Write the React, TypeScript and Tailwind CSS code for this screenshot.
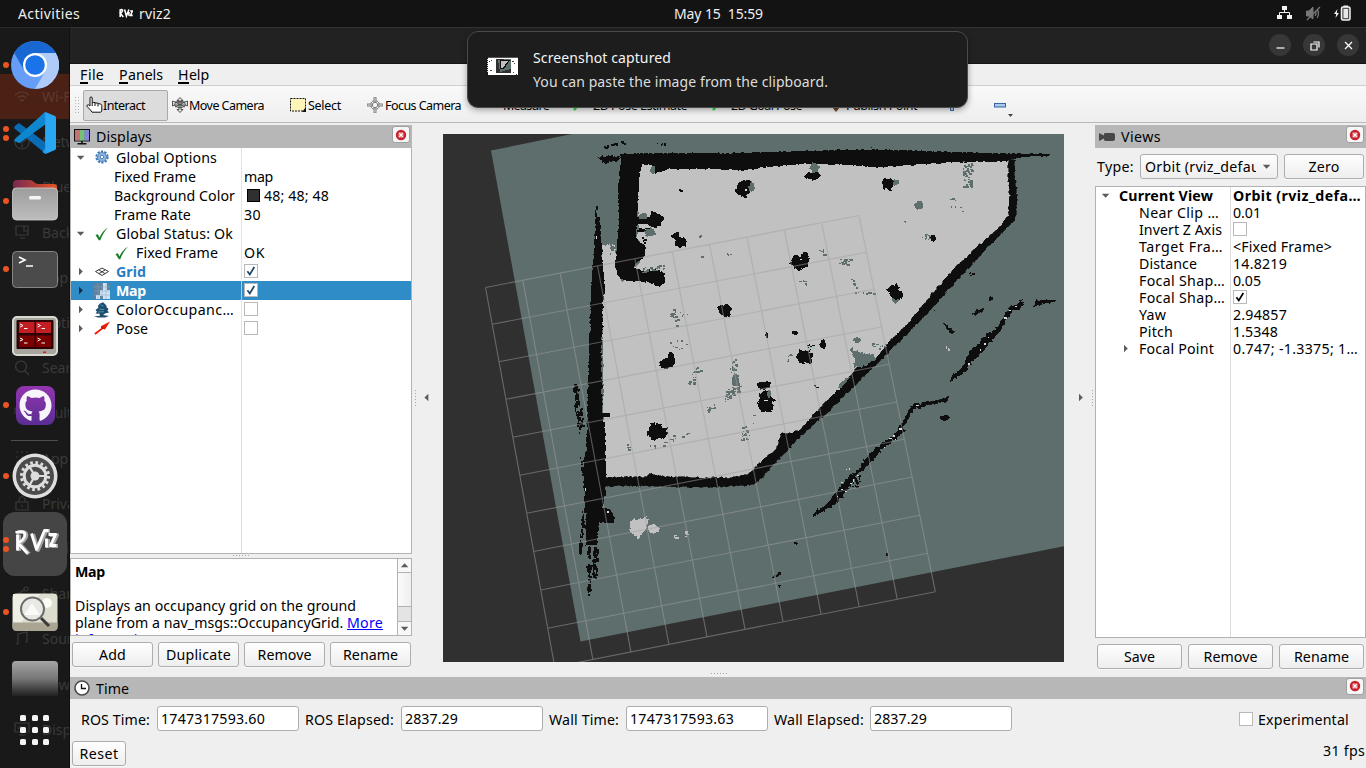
import React, { useLayoutEffect, useRef } from "react";
import { FaGithub } from "react-icons/fa";

/* ---------- text set to a given measure ---------- */
function Fit({ w, children, className = "" }: { w: number; children: string; className?: string }) {
  const ref = useRef<HTMLSpanElement>(null);
  useLayoutEffect(() => {
    const el = ref.current;
    if (!el) return;
    el.style.letterSpacing = "0px";
    const natural = el.getBoundingClientRect().width;
    el.style.letterSpacing = (w - natural) / children.length + "px";
  }, [w, children]);
  return (
    <span ref={ref} className={"inline-block shrink-0 self-center whitespace-pre " + className}>
      {children}
    </span>
  );
}

/* ---------- seeded noise and rough shapes for the occupancy map ---------- */
type P = [number, number];

function rng(seed: number) {
  let s = seed;
  return () => {
    s = (s * 1664525 + 1013904223) % 4294967296;
    return s / 4294967296;
  };
}

function rough(flat: number[], amp: number, seed: number): string {
  const pts: P[] = [];
  for (let i = 0; i < flat.length; i += 2) pts.push([flat[i], flat[i + 1]]);
  const r = rng(seed);
  const out: string[] = [];
  pts.forEach((a, i) => {
    const b = pts[(i + 1) % pts.length];
    const len = Math.hypot(b[0] - a[0], b[1] - a[1]);
    const n = Math.max(1, Math.round(len / 1.8));
    for (let k = 0; k < n; k++) {
      const t = k / n;
      const x = a[0] + (b[0] - a[0]) * t + (r() - 0.5) * amp;
      const y = a[1] + (b[1] - a[1]) * t + (r() - 0.5) * amp;
      out.push(x.toFixed(1) + "," + y.toFixed(1));
    }
  });
  return out.join(" ");
}

function Rough({ p, amp = 2, seed = 7, c = BLACK, grow = 0 }: { p: number[]; amp?: number; seed?: number; c?: string; grow?: number }) {
  return <polygon points={rough(p, amp, seed)} fill={c} stroke={grow ? c : "none"} strokeWidth={grow} />;
}

const BLACK = "#0e0e0e";
const FREE = "#c1c1c1";
const UNKNOWN = "#5e6e6c";

function Blob({ x, y, rx, ry, c = BLACK, seed = 3 }: { x: number; y: number; rx: number; ry: number; c?: string; seed?: number }) {
  const p: number[] = [];
  for (let i = 0; i < 12; i++) {
    const a = (i / 12) * Math.PI * 2;
    p.push(x + Math.cos(a) * rx, y + Math.sin(a) * ry);
  }
  return <Rough p={p} amp={Math.min(rx, ry) * 0.6} seed={seed + Math.round(x * 3 + y)} c={c} />;
}

function Specks({ from, to, spread, n, c, seed = 1, tall = 1 }: { from: P; to: P; spread: number; n: number; c: string; seed?: number; tall?: number }) {
  const r = rng(seed * 977 + Math.round(from[0] * 31 + from[1]));
  let d = "";
  for (let i = 0; i < n; i++) {
    const t = r();
    const x = Math.round(from[0] + (to[0] - from[0]) * t + (r() - 0.5) * spread);
    const y = Math.round(from[1] + (to[1] - from[1]) * t + (r() - 0.5) * spread);
    const w = 1 + Math.floor(r() * 2.7);
    const h = (1 + Math.floor(r() * 2)) * tall;
    d += "M" + x + " " + y + "h" + w + "v" + h + "h-" + w + "z";
  }
  return <path d={d} fill={c} />;
}

const GRID_L: P[] = [[485.5, 287.5], [492.3, 324.3], [499, 361.7], [505.7, 399.3], [512.7, 437.3], [519.7, 475.3], [526.7, 513.3], [533.7, 551.5], [540.7, 590], [547.7, 628.3], [554.8, 667]];
const GRID_R: P[] = [[859, 215.5], [866.3, 252.3], [873.7, 289.3], [881.3, 327], [889, 364.3], [896.7, 402], [904.3, 439.3], [912.3, 477], [920, 515.3], [927.5, 553.3], [935.3, 591.7]];

function Grid() {
  const d: string[] = [];
  for (let i = 0; i <= 10; i++) {
    d.push("M" + GRID_L[i].join(" ") + "L" + GRID_R[i].join(" "));
    const t = i / 10;
    const top = [GRID_L[0][0] + (GRID_R[0][0] - GRID_L[0][0]) * t, GRID_L[0][1] + (GRID_R[0][1] - GRID_L[0][1]) * t];
    const bot = [GRID_L[10][0] + (GRID_R[10][0] - GRID_L[10][0]) * t, GRID_L[10][1] + (GRID_R[10][1] - GRID_L[10][1]) * t];
    d.push("M" + top.join(" ") + "L" + bot.join(" "));
  }
  return <path d={d.join("")} stroke="#a0a0a4" strokeOpacity="0.5" strokeWidth="1.15" fill="none" />;
}

const OBSTACLES: number[][] = [
  [743, 190, 7, 8], [746, 184, 5, 4], [680, 242, 6, 6], [676, 236, 4, 4], [725, 311, 7, 6], [667, 364, 8, 5], [671, 358, 4, 6],
  [800, 262, 9, 7], [805, 256, 4, 4], [657, 432, 11, 8], [813, 176, 8, 4], [887, 184, 6, 6], [933, 238, 3, 3.5], [894, 290, 6, 6], [897, 295, 6, 5],
  [823, 344, 3, 5], [805, 356, 9, 7], [766, 400, 8, 11], [764, 385, 7, 4], [767, 407, 7, 5],
  [795, 333, 3, 2], [767, 335, 1.5, 3], [606, 415, 5, 3],
];

function MapView() {
  return (
    <svg width="621" height="528" viewBox="443 134 621 528" className="block bg-[#303030]">
      <polygon points="491,150.5 577,133 1065,133 1065,546 580.5,641.5" fill={UNKNOWN} />
      <g shapeRendering="crispEdges">
        {/* free space */}
        <Rough c={FREE} amp={1.5} p={[640, 160, 1010, 160, 1012, 215, 970, 260, 935, 300, 885, 352, 858, 372, 800, 430, 752, 478, 604, 480, 602, 246, 614, 243, 617, 262, 622, 282, 640, 262, 638, 200]} />
        {/* upper wall, running into the thick left corner */}
        <Rough amp={1.6} p={[620, 153.5, 680, 153, 740, 153, 800, 151, 850, 149.5, 900, 150, 950, 152, 1000, 153.5, 1020, 153.5, 1051, 154, 1048, 156, 1020, 157, 1005, 161.5, 950, 162.5, 900, 166, 880, 167.5, 850, 165, 800, 164, 765, 167, 744, 171, 720, 169, 670, 169, 655, 174, 652, 165, 642, 164, 639, 178, 638, 200, 637, 216, 650, 217, 652, 211, 659, 214, 664, 218, 661, 226, 655, 228, 645, 224, 637, 225, 636, 236, 641, 243, 645, 246, 645, 256, 636, 264, 634, 268, 645, 272, 645, 281, 630, 281, 620, 279, 615, 268, 617, 250, 619, 220, 618, 190, 620, 170]} />
        <Rough p={[645, 271, 655, 269, 664, 272, 666, 280, 660, 287, 652, 283, 640, 281]} amp={3} />
        <Rough p={[598, 157, 610, 155, 622, 157, 620, 160, 604, 163]} amp={3} />
        <Specks from={[604, 146]} to={[625, 142]} spread={3} n={20} c={BLACK} />
        <Specks from={[658, 144]} to={[666, 144]} spread={3} n={6} c={BLACK} />
        <Specks from={[596, 206]} to={[598, 238]} spread={3} n={30} c={BLACK} tall={2} />
        {/* left wall */}
        <Rough p={[596, 216, 595, 235, 594, 250, 593, 262, 591, 290, 590, 320, 589, 350, 588, 390, 587, 420, 586, 450, 583, 470, 584, 490, 586, 510, 586, 545, 590, 545, 597, 545, 599, 523, 615, 523, 615, 517, 610, 509, 602, 508, 605, 495, 606, 475, 606, 455, 605, 430, 602, 410, 602, 380, 601, 350, 603, 330, 603, 300, 605, 292, 603, 270, 602, 250, 600, 230, 598, 216]} />
        <Specks from={[588, 545]} to={[588, 593]} spread={4} n={40} c={BLACK} tall={2} />
        <Specks from={[595, 545]} to={[594, 575]} spread={5} n={38} c={BLACK} tall={2} />
        <Specks from={[575, 383]} to={[580, 430]} spread={6} n={52} c={BLACK} tall={2} />
        <Specks from={[585, 495]} to={[579, 550]} spread={2} n={40} c={BLACK} tall={2} />
        <Specks from={[582, 458]} to={[583, 475]} spread={4} n={14} c={BLACK} tall={2} />
        {/* lower wall and the long diagonal */}
        <Rough grow={0.6} p={[600, 477, 645, 477, 650, 474, 670, 477, 730, 478, 748, 475, 763, 460, 776, 450, 781, 434, 790, 433, 800, 430, 817, 411, 837, 391, 850, 377, 857, 367, 877, 357, 890, 341, 910, 322, 930, 296, 950, 273, 977, 247, 1000, 227, 1008, 216, 1010, 197, 1008, 177, 1009, 160, 1015, 160, 1015, 177, 1017, 197, 1015, 220, 993, 242, 963, 273, 937, 303, 910, 331, 883, 358, 863, 377, 843, 397, 830, 410, 803, 434, 783, 455, 756, 483, 745, 486, 700, 487, 650, 486, 600, 486]} />
        {/* unexplored patches inside the room */}
        <Rough c={UNKNOWN} amp={3} p={[848, 346, 860, 352, 874, 355, 876, 359, 862, 367, 853, 367, 855, 358]} />
        <Blob x={857} y={340} rx={4} ry={3} c={UNKNOWN} />
        <Rough c={UNKNOWN} amp={2} p={[838, 387, 845, 378, 850, 377, 842, 388]} />
        <Blob x={815} y={168} rx={5} ry={5} c={UNKNOWN} />
        <Blob x={751} y={186} rx={4} ry={5} c={UNKNOWN} />
        <Blob x={895} y={182} rx={4} ry={3} c={UNKNOWN} />
        <Blob x={919} y={205} rx={4} ry={5} c={UNKNOWN} />
        <Blob x={896} y={299} rx={4} ry={4} c={UNKNOWN} />
        <Blob x={650} y={232} rx={6} ry={5} c={UNKNOWN} />
        <Blob x={643} y={216} rx={5} ry={3} c={UNKNOWN} />
        <Blob x={653} y={170} rx={2.5} ry={4} c={UNKNOWN} />
        <Blob x={640} y={236} rx={4} ry={5} c={FREE} />
        <Specks from={[967, 163]} to={[967, 186]} spread={9} n={50} c={UNKNOWN} />
        <Specks from={[610, 242]} to={[612, 252]} spread={7} n={12} c={UNKNOWN} />
        <Specks from={[642, 270]} to={[663, 266]} spread={5} n={24} c={UNKNOWN} />
        <Specks from={[671, 311]} to={[676, 322]} spread={7} n={20} c={UNKNOWN} />
        <Specks from={[656, 340]} to={[686, 345]} spread={9} n={8} c={UNKNOWN} />
        <Specks from={[690, 385]} to={[697, 368]} spread={6} n={16} c={UNKNOWN} />
        <Specks from={[732, 360]} to={[736, 390]} spread={7} n={34} c={UNKNOWN} />
        <Blob x={736} y={382} rx={4} ry={5} c={UNKNOWN} />
        <Specks from={[724, 400]} to={[738, 386]} spread={8} n={36} c={UNKNOWN} />
        <Specks from={[706, 410]} to={[716, 406]} spread={4} n={12} c={UNKNOWN} />
        <Specks from={[742, 440]} to={[750, 417]} spread={9} n={18} c={UNKNOWN} />
        <Specks from={[651, 448]} to={[686, 432]} spread={5} n={16} c={UNKNOWN} />
        <Specks from={[626, 444]} to={[629, 448]} spread={3} n={6} c={UNKNOWN} />
        <Specks from={[841, 260]} to={[849, 262]} spread={6} n={18} c={UNKNOWN} />
        <Specks from={[820, 248]} to={[829, 258]} spread={4} n={7} c={UNKNOWN} />
        <Specks from={[800, 280]} to={[806, 283]} spread={5} n={6} c={UNKNOWN} />
        <Specks from={[855, 292]} to={[873, 292]} spread={2} n={9} c={UNKNOWN} />
        <Specks from={[850, 277]} to={[858, 288]} spread={3} n={7} c={UNKNOWN} />
        <Specks from={[948, 200]} to={[962, 208]} spread={12} n={7} c={UNKNOWN} />
        <Specks from={[924, 235]} to={[931, 239]} spread={5} n={12} c={UNKNOWN} />
        <Specks from={[786, 362]} to={[792, 352]} spread={4} n={6} c={UNKNOWN} />
        <Specks from={[699, 232]} to={[701, 264]} spread={3} n={3} c={UNKNOWN} />
        <Specks from={[726, 253]} to={[730, 256]} spread={3} n={4} c={UNKNOWN} />
        <Specks from={[676, 311]} to={[687, 315]} spread={4} n={5} c={UNKNOWN} />
        <Specks from={[870, 345]} to={[886, 345]} spread={6} n={9} c={UNKNOWN} />
        <Specks from={[904, 221]} to={[905, 222]} spread={1} n={2} c={UNKNOWN} />
        {/* obstacles */}
        {OBSTACLES.map((o, i) => (
          <Blob key={i} x={o[0]} y={o[1]} rx={o[2]} ry={o[3]} seed={i + 5} />
        ))}
        <Specks from={[638, 229]} to={[648, 230]} spread={3} n={10} c={BLACK} />
        <Specks from={[641, 235]} to={[644, 241]} spread={2} n={6} c={BLACK} />
        <Specks from={[679, 189]} to={[681, 190]} spread={1} n={2} c={BLACK} />
        <Blob x={769} y={394} rx={2} ry={4} c={UNKNOWN} />
        <path d="M745 189h2v2h-2zM800 259h2v1h-2zM764 400h4v1h-4zM607 511h2v2h-2zM585 488h1v3h-1zM596 236h1v3h-1z" fill="#dcdcdc" />
        <Specks from={[808, 344]} to={[813, 347]} spread={4} n={8} c={BLACK} />
        <Specks from={[809, 345]} to={[811, 347]} spread={4} n={4} c="#a9bcc0" />
        <Specks from={[814, 384]} to={[815, 387]} spread={2} n={3} c={BLACK} />
        {/* returns seen beyond the walls */}
        <Rough amp={3} grow={1.6} p={[814, 515, 818, 511, 830, 502, 837, 493, 846, 481, 860, 469, 868, 457, 880, 446, 895, 434, 902, 426, 911, 408, 916, 404, 912, 410, 904, 424, 903, 431, 893, 440, 880, 449, 871, 461, 855, 476, 848, 488, 838, 500, 828, 508]} />
        <Rough amp={2.4} grow={0.8} p={[922, 403, 938, 400, 949, 397, 947, 401, 935, 403, 922, 406]} />
        <Specks from={[914, 406]} to={[926, 402]} spread={5} n={26} c={BLACK} />
        <Specks from={[853, 484]} to={[860, 473]} spread={7} n={20} c={BLACK} />
        <path d="M841 489h2v1h-2zM845 491h2v1h-2zM850 483h2v1h-2zM853 479h1v3h-1zM857 475h2v1h-2zM841 482h2v1h-2zM846 469h1v1h-1zM849 468h1v2h-1zM837 496h1v1h-1zM889 438h3v1h-3zM893 435h2v2h-2zM884 447h1v1h-1zM899 428h3v2h-3zM895 439h1v1h-1zM916 405h3v1h-3z" fill="#d4d8d8" />
        <Blob x={945} y={418} rx={5} ry={2.6} />
        <Rough amp={3} grow={1.4} p={[951, 380, 955, 374, 966, 364, 970, 352, 982, 342, 988, 333, 996, 331, 1004, 318, 1010, 308, 1021, 302, 1022, 305, 1012, 312, 1005, 320, 998, 333, 988, 343, 980, 354, 970, 362, 966, 370]} />
        <path d="M1004 317h3v2h-3zM1009 310h2v1h-2zM1015 306h2v1h-2zM968 363h2v2h-2zM984 343h2v2h-2zM980 349h1v2h-1zM988 337h1v1h-1z" fill="#d4d8d8" />
        <Rough amp={2} grow={1} p={[1034, 306, 1037, 301, 1046, 300, 1056, 301, 1044, 303, 1036, 305]} />
        <Specks from={[1020, 300]} to={[1023, 304]} spread={3} n={6} c={BLACK} />
        <Rough amp={3} grow={0.8} p={[973, 313, 978, 310, 984, 308, 982, 311, 976, 314]} />
        <Specks from={[988, 303]} to={[991, 295]} spread={3} n={10} c={BLACK} />
        <Rough amp={2.4} grow={0.8} p={[944, 322, 949, 327, 954, 332, 951, 333, 947, 327]} />
        <Specks from={[968, 272]} to={[971, 274]} spread={3} n={4} c={BLACK} />
        <Specks from={[946, 346]} to={[948, 350]} spread={3} n={5} c={FREE} />
        <Specks from={[794, 543]} to={[798, 541]} spread={2} n={5} c={BLACK} />
        <Specks from={[772, 577]} to={[780, 571]} spread={1} n={10} c={BLACK} />
        <Specks from={[778, 585]} to={[779, 586]} spread={1} n={3} c={BLACK} />
        <path d="M886 553h2v3h-2zM871 147h1v1h-1zM934 310h1v1h-1z" fill={BLACK} />
        {/* free patches below the room */}
        <Rough c={FREE} amp={3} p={[630, 520, 642, 518, 647, 516, 649, 523, 643, 533, 638, 538, 630, 531]} />
        <Blob x={654} y={529} rx={6} ry={4} c={FREE} />
        <Specks from={[672, 536]} to={[677, 537]} spread={2} n={6} c={FREE} />
        <Specks from={[685, 535]} to={[687, 531]} spread={3} n={9} c={FREE} />
      </g>
      <Grid />
    </svg>
  );
}

/* ---------- small widgets ---------- */
function Btn({ className, label, w }: { className: string; label: string; w: number }) {
  return (
    <button className={"flex shrink-0 items-center justify-center rounded-[3px] border border-[#adadad] bg-gradient-to-b from-[#fefefe] to-[#eeeeee] shadow-[0_1px_0_#f8f8f8] " + className}>
      <Fit w={w}>{label}</Fit>
    </button>
  );
}

function CloseBtn() {
  return (
    <span className="flex h-[17px] w-[18px] items-center justify-center rounded-[3px] border border-[#a0a0a0] bg-[#f6f6f6]">
      <svg width="12" height="12" viewBox="0 0 12 12">
        <circle cx="6" cy="6" r="5.2" fill="#c6202c" />
        <rect x="3" y="3" width="6" height="6" rx="1.5" fill="#dc6068" />
        <path d="M4.3 4.3l3.4 3.4M7.7 4.3L4.3 7.7" stroke="#fff" strokeWidth="1.3" />
      </svg>
    </span>
  );
}

function Check({ on = false, blue = false }: { on?: boolean; blue?: boolean }) {
  return (
    <span className="flex h-[14px] w-[14px] items-center justify-center border border-[#b9b9b9] bg-white">
      {on && (
        <svg width="10" height="10" viewBox="0 0 10 10" fill="none">
          <path d="M1.4 5.2l2.4 3.2L8.3 1" stroke={blue ? "#1d4664" : "#000"} strokeWidth="1.7" />
        </svg>
      )}
    </span>
  );
}

function Caret({ dir, dark = false }: { dir: "d" | "r" | "l" | "u" | ""; dark?: boolean }) {
  const d = { d: "M.8 2.8h7.600L4.600 6.800z", u: "M.8 6.300h7.600L4.600 2.200z", r: "M3 .8v7.400L6.800 4.500z", l: "M6.400.8v7.400L2.400 4.500z", "": "" }[dir];
  return (
    <svg width="9" height="9" viewBox="0 0 9 9" className="shrink-0">
      <path d={d} fill={dark ? "#0c2c46" : "#5c5c5c"} />
    </svg>
  );
}

function Dots({ vertical = false }: { vertical?: boolean }) {
  const n = [0, 1, 2, 3, 4, 5];
  return vertical ? (
    <svg width="2" height="16" viewBox="0 0 2 16">{n.map((i) => <rect key={i} y={i * 3} width="1" height="1" fill="#a5a5a5" />)}</svg>
  ) : (
    <svg width="17" height="2" viewBox="0 0 17 2" className="block">{n.map((i) => <rect key={i} x={i * 3} width="1" height="1" fill="#a5a5a5" />)}</svg>
  );
}

/* ---------- tree icons ---------- */
const TickIcon = () => (
  <svg width="16" height="16" viewBox="0 0 16 16"><path d="M1.5 9L3.8 8.2 5.5 11.4C7.5 7 10 4.2 14 1.5 10.6 5.2 8 9.4 6.3 14.2H4.8z" fill="#1b7d26" /></svg>
);
const GearIcon = () => (
  <svg width="16" height="16" viewBox="0 0 16 16">
    <circle cx="8" cy="7" r="5.6" fill="none" stroke="#3a76b5" strokeWidth="2" strokeDasharray="2.2 1.32" />
    <circle cx="8" cy="7" r="4.5" fill="#8db4dc" stroke="#4f86c2" />
    <circle cx="8" cy="7" r="1.7" fill="#fff" stroke="#4f86c2" />
  </svg>
);
const GridIcon = () => (
  <svg width="16" height="16" viewBox="0 0 16 16"><path d="M1.5 7.5L8 4l6.5 3.5L8 11.5zM4.7 5.8l6.5 3.9M11.3 5.8L4.8 9.7" stroke="#3c3c3c" fill="none" /></svg>
);
const MapIcon = () => (
  <svg width="16" height="16" viewBox="0 0 16 16">
    <rect width="16" height="16" fill="#5f7f9b" />
    <path d="M9 0h4v7h3v9H9v-3H6v3H2v-4h4V7h3z" fill="#cfe3f4" />
    <path d="M0 4h16M0 8h16M0 12h16M4 0v16M8 0v16M12 0v16" stroke="#8aa6be" strokeWidth=".5" />
  </svg>
);
const TreeIcon = () => (
  <svg width="16" height="16" viewBox="0 0 16 16">
    <path d="M6 1.5L9 .3l2 1.7 1.500 1.700 0 1.600 2 1.400-1 2 1.600 1.800-3.600.8L9 13l6 1-4 1.600H4L0 14.300l6-.6-.5-1.900-4-.2 1.500-1.900L1.500 8l2.800-2.200-.2-2.200z" fill="#1f4f6e" />
    <path d="M6.500 3l3 1M5 7l5 .6M4 10l6-.3" stroke="#4d8fb0" />
  </svg>
);
const PoseIcon = () => (
  <svg width="16" height="16" viewBox="0 0 16 16"><path d="M.3 12.3L7.5 7l-.6-1.700L16 .5 11 8.600l-1.800-.8L1.600 13.700z" fill="#f01808" /><path d="M6.900 5.300l4.100 3.300-2-.8L7.500 7z" fill="#7c1a10" /></svg>
);
const MonitorIcon = () => (
  <svg width="16" height="16" viewBox="0 0 16 16">
    <rect x=".5" y=".5" width="15" height="11.5" fill="#777" stroke="#111" />
    <path d="M1 1h5v10.5H1z" fill="#c27474" /><path d="M6 1h4.5v10.5H6z" fill="#74c274" /><path d="M10.500 1H15v10.500h-4.500z" fill="#8686d8" />
    <path d="M8 12v2M3.500 14.800h9" stroke="#111" strokeWidth="1.600" />
  </svg>
);

type Row = { depth: number; caret: "d" | "r" | ""; icon?: React.ReactNode; name: string; w: number; value?: React.ReactNode; sel?: boolean; style?: string };

const ROWS: Row[] = [
  { depth: 0, caret: "d", icon: <GearIcon />, name: "Global Options", w: 101 },
  { depth: 1, caret: "", name: "Fixed Frame", w: 82, value: <Fit w={29}>map</Fit> },
  { depth: 1, caret: "", name: "Background Color", w: 121, value: <><span className="mr-[4px] ml-[3px] h-[13px] w-[13px] border border-black bg-[#303030]" /><Fit w={65}>48; 48; 48</Fit></> },
  { depth: 1, caret: "", name: "Frame Rate", w: 77, value: <Fit w={17}>30</Fit> },
  { depth: 0, caret: "d", icon: <TickIcon />, name: "Global Status: Ok", w: 117 },
  { depth: 2, caret: "", icon: <TickIcon />, name: "Fixed Frame", w: 82, value: <Fit w={21}>OK</Fit> },
  { depth: 0, caret: "r", icon: <GridIcon />, name: "Grid", w: 30, value: <Check on blue />, style: "font-bold text-[#2a7dc4]" },
  { depth: 0, caret: "r", icon: <MapIcon />, name: "Map", w: 30, value: <Check on blue />, sel: true, style: "font-bold" },
  { depth: 0, caret: "r", icon: <TreeIcon />, name: "ColorOccupanc…", w: 118, value: <Check /> },
  { depth: 0, caret: "r", icon: <PoseIcon />, name: "Pose", w: 32, value: <Check /> },
];

function DisplaysPanel() {
  return (
    <section className="flex w-[342px] shrink-0 flex-col">
      <header className="flex h-[23px] items-center bg-[#b7b7b7] pr-[2px] pl-[4px]">
        <MonitorIcon />
        <span className="ml-[6px] flex-1"><Fit w={56}>Displays</Fit></span>
        <span className="-mt-[4px]"><CloseBtn /></span>
      </header>
      <div className="flex h-[406px] flex-col border-x border-b border-[#b2b2b2] bg-white">
        {ROWS.map((r, i) => (
          <div key={i} className={"flex h-[19px] shrink-0 items-stretch " + (r.sel ? "bg-[#308cc6] text-white" : "")}>
            <div className="flex w-[171px] items-center border-r border-[#dcdcdc]/80">
              <span className="ml-[5px] flex w-[18px]"><Caret dir={r.caret} dark={r.sel} /></span>
              {r.depth === 2 && <span className="w-[20px]" />}
              {r.depth === 1 ? <span className="w-[20px]" /> : <span className="mr-[6px] flex w-[16px]">{r.icon}</span>}
              <Fit w={r.w} className={r.style}>{r.name}</Fit>
            </div>
            <div className="-mt-px flex items-center pl-[2px]">{r.value}</div>
          </div>
        ))}
        <div className="flex flex-1"><div className="w-[171px] border-r border-[#dcdcdc]" /></div>
      </div>
      <div className="flex h-[4px] items-center justify-center"><Dots /></div>
      <div className="flex h-[78px] border border-[#b2b2b2] bg-white">
        <div className="flex flex-1 flex-col overflow-hidden pt-[4px] pl-[4px] leading-[17px]">
          <div className="h-[17px] shrink-0"><Fit w={30} className="font-bold">Map</Fit></div>
          <div className="h-[17px] shrink-0" />
          <div className="h-[17px] shrink-0"><Fit w={281}>Displays an occupancy grid on the ground</Fit></div>
          <div className="flex h-[17px] shrink-0"><Fit w={272}>plane from a nav_msgs::OccupancyGrid. </Fit><Fit w={36} className="text-[#0000ff] underline">More</Fit></div>
          <div className="h-[17px] shrink-0"><Fit w={84} className="text-[#0000ff] underline">information.</Fit></div>
        </div>
        <div className="flex w-[14px] flex-col border-l border-[#b2b2b2] bg-[#e4e4e4]">
          <span className="flex h-[14px] items-center justify-center border-b border-[#b2b2b2] bg-[#f8f8f8]"><Caret dir="u" /></span>
          <span className="h-[34px] border-b border-[#b2b2b2] bg-gradient-to-r from-[#fbfbfb] to-[#eeeeee]" />
          <span className="flex-1" />
          <span className="flex h-[14px] items-center justify-center border-t border-[#b2b2b2] bg-[#f8f8f8]"><Caret dir="d" /></span>
        </div>
      </div>
      <div className="flex gap-[5px] pt-[6px] pl-[2px]">
        <Btn className="h-[25px] w-[81px]" label="Add" w={27} />
        <Btn className="h-[25px] w-[81px]" label="Duplicate" w={65} />
        <Btn className="h-[25px] w-[81px]" label="Remove" w={54} />
        <Btn className="h-[25px] w-[81px]" label="Rename" w={55} />
      </div>
    </section>
  );
}

type VRow = { name: string; w: number; v: string | null; vw: number; on?: boolean; caret?: "d" | "r"; bold?: boolean };
const VIEW_ROWS: VRow[] = [
  { name: "Current View", w: 94, v: "Orbit (rviz_defa…", vw: 128, caret: "d", bold: true },
  { name: "Near Clip …", w: 80, v: "0.01", vw: 28 },
  { name: "Invert Z Axis", w: 83, v: null, vw: 0 },
  { name: "Target Fra…", w: 84, v: "<Fixed Frame>", vw: 99 },
  { name: "Distance", w: 58, v: "14.8219", vw: 54 },
  { name: "Focal Shap…", w: 86, v: "0.05", vw: 28 },
  { name: "Focal Shap…", w: 86, v: null, vw: 0, on: true },
  { name: "Yaw", w: 27, v: "2.94857", vw: 54 },
  { name: "Pitch", w: 34, v: "1.5348", vw: 45 },
  { name: "Focal Point", w: 75, v: "0.747; -1.3375; 1…", vw: 125, caret: "r" },
];

function ViewsPanel() {
  return (
    <section className="flex w-[271px] shrink-0 flex-col">
      <header className="flex h-[23px] items-center bg-[#b7b7b7] pr-[2px] pl-[4px]">
        <svg width="17" height="10" viewBox="0 0 17 10"><path d="M0 1l5 2.500V1.500Q5.500 1 7 1h7q2 0 2 2v4q0 2-2 2H7Q5 9 5 7.500v-1L0 9z" fill="#474747" /></svg>
        <span className="ml-[5px] flex-1"><Fit w={40}>Views</Fit></span>
        <span className="-mt-[4px]"><CloseBtn /></span>
      </header>
      <div className="flex h-[38px] items-center pb-px pl-[2px]">
        <span className="w-[43px]"><Fit w={37}>Type:</Fit></span>
        <div className="flex h-[25px] w-[138px] items-center rounded-[3px] border border-[#adadad] bg-gradient-to-b from-[#fefefe] to-[#eeeeee] pl-[4px]">
          <span className="flex w-[111px] overflow-hidden"><Fit w={115}>Orbit (rviz_defau</Fit></span>
          <span className="ml-[6px] flex"><Caret dir="d" /></span>
        </div>
        <Btn className="ml-[6px] h-[25px] w-[80px]" label="Zero" w={31} />
      </div>
      <div className="flex h-[452px] flex-col border border-[#b2b2b2] bg-white">
        {VIEW_ROWS.map((r, i) => (
          <div key={i} className={"flex h-[17px] shrink-0 " + (r.bold ? "font-bold" : "")}>
            <div className="flex w-[135px] items-center border-r border-[#dcdcdc]">
              <span className={"flex " + (r.bold ? "ml-[5px] w-[18px]" : "ml-[25px] w-[18px]")}>{r.caret && <Caret dir={r.caret} />}</span>
              <Fit w={r.w}>{r.name}</Fit>
            </div>
            <div className="flex items-center pl-[2px]">{r.v === null ? <span className="-mt-[2px]"><Check on={r.on} /></span> : <Fit w={r.vw}>{r.v}</Fit>}</div>
          </div>
        ))}
        <div className="flex flex-1"><div className="w-[135px] border-r border-[#dcdcdc]" /></div>
      </div>
      <div className="flex gap-[6px] pt-[6px] pl-[2px]">
        <Btn className="h-[25px] w-[85px]" label="Save" w={31} />
        <Btn className="h-[25px] w-[85px]" label="Remove" w={54} />
        <Btn className="h-[25px] w-[85px]" label="Rename" w={55} />
      </div>
    </section>
  );
}

function Field({ label, lw, value, vw, cell }: { label: string; lw: number; value: string; vw: number; cell: string }) {
  return (
    <div className="flex items-center">
      <span className={cell}><Fit w={lw}>{label}</Fit></span>
      <span className="-mt-px flex h-[25px] w-[142px] items-center rounded-[3px] border border-[#adadad] bg-white pl-[3px]"><Fit w={vw}>{value}</Fit></span>
    </div>
  );
}

function TimePanel() {
  return (
    <section className="flex h-[91px] shrink-0 flex-col">
      <header className="flex h-[22px] items-center bg-[#b7b7b7] pr-[2px] pl-[4px]">
        <svg width="16" height="16" viewBox="0 0 16 16"><circle cx="8" cy="8" r="7" fill="#fff" stroke="#4a4a4a" strokeWidth="1.600" /><path d="M7.500 4v4.500H12" stroke="#111" fill="none" strokeWidth="1.300" /></svg>
        <span className="ml-[6px] flex-1"><Fit w={33}>Time</Fit></span>
        <span className="-mt-[4px]"><CloseBtn /></span>
      </header>
      <div className="flex h-[40px] items-center pl-[11px]">
        <Field label="ROS Time:" lw={69} value="1747317593.60" vw={104} cell="w-[76px]" />
        <Field label="ROS Elapsed:" lw={89} value="2837.29" vw={53} cell="w-[102px] pl-[6px]" />
        <Field label="Wall Time:" lw={70} value="1747317593.63" vw={104} cell="w-[83px] pl-[6px]" />
        <Field label="Wall Elapsed:" lw={90} value="2837.29" vw={53} cell="w-[102px] pl-[6px]" />
        <span className="ml-[227px]"><Check /></span>
        <Fit w={91} className="ml-[5px]">Experimental</Fit>
      </div>
      <div className="flex items-center justify-between pt-[2px] pr-[1px] pl-[2px]">
        <Btn className="h-[25px] w-[54px]" label="Reset" w={39} />
        <Fit w={42} className="-mt-[7px]">31 fps</Fit>
      </div>
    </section>
  );
}

/* ---------- toolbar ---------- */
const MoveIcon = ({ focus = false }: { focus?: boolean }) => (
  <svg width="16" height="16" viewBox="0 0 16 16" fill="none" stroke={focus ? "#777" : "#444"} strokeWidth=".9">
    {focus ? (
      <><circle cx="8" cy="8" r="4.500" /><circle cx="8" cy="8" r="2.700" /><path d="M7 0h2v5H7zM7 11h2v5H7zM0 7h5v2H0zM11 7h5v2h-5z" fill="#ddd" /></>
    ) : (
      <><path d="M5 3.500L8 .5l3 3H9v9h2l-3 3-3-3h2v-9zM3 5L.5 4v5L3 8h10l2.500 1V4L13 5z" fill="#ddd" /><ellipse cx="8" cy="7.500" rx="5.500" ry="3" /><path d="M3 10l10-5M3 5l10 5" /></>
    )}
  </svg>
);

function Toolbar() {
  return (
    <div className="flex h-[38px] shrink-0 items-center border-t border-b border-t-[#cfcfcf] border-b-[#b9b9b9] bg-gradient-to-b from-[#f9f9f9] to-[#eeeeee] pt-[2px] text-[12.5px]">
      <svg width="5" height="17" viewBox="0 0 5 17" className="ml-[5px]">
        {[0, 1, 2, 3, 4, 5].map((i) => <path key={i} d={"M0 " + i * 3 + "h1v1h-1zM3 " + i * 3 + "h1v1h-1z"} fill="#b5b5b5" />)}
      </svg>
      <div className="ml-[3px] flex h-[31px] w-[85px] items-center rounded-[2px] border border-[#a9a9a9] bg-[#dcdcdc] pl-[2px]">
        <svg width="17" height="17" viewBox="0 0 17 17" className="-mt-[2px]"><path d="M4 7V1.500Q5 .3 6.200 1.500V7l1-.6 1.800.2 1 .5 1.800 0 1 .6 2 .3 1 1.500V15l-1 1.200H6L4.500 14 1 10.500Q.6 8.500 2.500 8.800L4 10zM6.200 7v3M9 7v3M12 7.500v3" fill="#fff" stroke="#111" /></svg>
        <Fit w={42}>Interact</Fit>
      </div>
      <span className="ml-[4px]"><MoveIcon /></span>
      <Fit w={75} className="ml-[1px]">Move Camera</Fit>
      <svg width="16" height="14" viewBox="0 0 16 14" className="ml-[26px]"><rect x=".5" y=".5" width="15" height="12.500" fill="#fdf6b8" stroke="#111" strokeDasharray="2 1" /><path d="M16 9v5h-4z" fill="#111" /></svg>
      <Fit w={33} className="ml-[2px]">Select</Fit>
      <span className="ml-[26px]"><MoveIcon focus /></span>
      <Fit w={76} className="ml-[2px]">Focus Camera</Fit>
      <Fit w={46} className="ml-[42px]">Measure</Fit>
      <svg width="12" height="16" viewBox="0 0 12 16" className="ml-[24px]"><path d="M1 13L10 3" stroke="#1ce03a" strokeWidth="2.500" /></svg>
      <Fit w={94} className="ml-[8px]">2D Pose Estimate</Fit>
      <svg width="12" height="16" viewBox="0 0 12 16" className="ml-[25px]"><path d="M1 13L10 3" stroke="#1ce03a" strokeWidth="2.500" /></svg>
      <Fit w={71} className="ml-[7px]">2D Goal Pose</Fit>
      <svg width="10" height="16" viewBox="0 0 10 16" className="ml-[29px]"><path d="M1 3h8v7L5 15 1 10z" fill="#6f4426" /></svg>
      <Fit w={71} className="ml-[5px]">Publish Point</Fit>
      <svg width="12" height="12" viewBox="0 0 12 12" className="ml-[29px]"><path d="M4.500.5h3v4h4v3h-4v4h-3v-4h-4v-3h4z" fill="#b5d0ee" stroke="#3566a5" /></svg>
      <svg width="12" height="5" viewBox="0 0 12 5" className="ml-[36px]"><rect x=".5" y=".5" width="11" height="3.500" fill="#a9c8ea" stroke="#3566a5" /></svg>
      <svg width="5" height="3" viewBox="0 0 5 3" className="mt-[20px] ml-[2px]"><path d="M0 0h5L2.500 3z" fill="#444" /></svg>
    </div>
  );
}

/* ---------- dock ---------- */
const GHOSTS = ["Wi-Fi", "Network", "Bluetooth", "Background", "Appearance", "Notifications", "Search", "Multitasking", "Applications", "Privacy", "Online Accounts", "Sharing", "Sound", "Power", "Displays"];
const GHOST_ICONS = [
  "M1 6q7-6 14 0M3.500 9q4.500-4 9 0M6 12q2-2 4 0", "M8 1a7 7 0 1 0 .1 0M3 4l5 4v6M13 5l-4 3", "M4 4l8 8-4 3V1l4 3-8 8", "M2 2h12v9H2zM6 14h5M10 2v5h4", "M2 2h12v9H2zM6 14h5",
  "M4 12V6q4-7 8 0v6zM7 14h2", "M7 1a5.500 5.500 0 1 0 .1 0M11 11l4 4", "M1 3h6v5H1zM9 3h6v5H9zM4 11h8v4H4z", "M2 2h2M7 2h2M12 2h2M2 7h2M7 7h2M12 7h2M2 12h2M7 12h2M12 12h2",
  "M2 7h12v8H2zM5 7V4q3-5 6 0v3M8 10v2", "M4 12q-4-4 1-6 4-5 7 1 5 4-1 5z", "M2 8a2 2 0 1 0 .1 0M12 1a2 2 0 1 0 .1 0M12 12a2 2 0 1 0 .1 0M4 8l6-4M4 10l6 3", "M4 13V3l9-2v10M2 13h2M11 11h2", "M8 1a7 7 0 1 0 .1 0M9 3L5 9h5l-2 4", "M1 2h14v9H1zM5 14h6M4 8l3-3",
];

function Slot({ dots = 0, active = false, children }: { dots?: number; active?: boolean; children: React.ReactNode }) {
  return (
    <div className="flex h-[68px] w-[70px] shrink-0 items-center">
      <div className="z-10 -mr-[10px] ml-[3px] flex w-[7px] flex-col gap-[3px]">
        {Array.from({ length: dots }, (_, i) => <i key={i} className="h-[6px] w-[6px] rounded-full bg-[#e95420]" />)}
      </div>
      <div className={"ml-[3px] flex h-[64px] w-[64px] items-center justify-center rounded-[12px] " + (active ? "bg-[#454545]" : "")}>{children}</div>
    </div>
  );
}

function Dock() {
  return (
    <aside className="relative w-[70px] shrink-0 overflow-hidden border-t border-r border-t-[#2a2a2a] border-r-[#101010] bg-[#191919] text-[14px] text-[#3a3a3a]">
      <div className="absolute inset-0 flex flex-col pt-[46px]">
        {GHOSTS.map((g, i) => (
          <div key={g} className={"flex h-[45.200px] shrink-0 items-center pl-[14px] " + (i === 0 ? "bg-[#4b2115] text-[#5f3a2d]" : "")}>
            <svg width="16" height="16" viewBox="0 0 16 16" fill="none" stroke="currentColor" strokeWidth="1.200" className="shrink-0"><path d={GHOST_ICONS[i]} /></svg>
            <span className="ml-[12px] whitespace-nowrap">{g}</span>
          </div>
        ))}
      </div>
      <div className="relative flex flex-col pt-[3px]">
        <Slot dots={1}>
          <svg width="48" height="48" viewBox="0 0 48 48">
            <circle cx="24" cy="24" r="24" fill="#669df6" />
            <path d="M3.200 12A24 24 0 0 1 44.800 12H24L13.600 30z" fill="#1967d2" />
            <path d="M24 12h20.800A24 24 0 0 1 24 48l10.400-18z" fill="#aecbfa" />
            <circle cx="24" cy="24" r="12" fill="#fff" /><circle cx="24" cy="24" r="9.800" fill="#1a73e8" />
          </svg>
        </Slot>
        <Slot dots={2}>
          <svg width="42" height="42" viewBox="0 0 42 42">
            <path d="M.5 14.500L4 11.500Q5 11 6 11.700L32 31v11L.5 16.500Q0 15.500.5 14.500z" fill="#0a6cb4" />
            <path d="M.5 27.500L31 0l3 10.500L6 30.800Q5 31.300 4 30.500L.5 29.200Q0 28.300.5 27.500z" fill="#0f87cf" />
            <path d="M31.500 0L41 4q1 .5 1 1.800v30.500q0 1.200-1 1.700l-9.500 4z" fill="#2aa7f3" /><path d="M30.500.5q1-.5 1.500.5v40q-.5 1-1.500.5l-2-1.500L31 36V11z" fill="#1f9cf0" />
          </svg>
        </Slot>
        <Slot dots={1}>
          <svg width="46" height="42" viewBox="0 0 46 42" className="-mt-[2px]">
            <defs><linearGradient id="fd"><stop stopColor="#772953" /><stop offset="1" stopColor="#e95420" /></linearGradient><linearGradient id="fg" x2="0" y2="1"><stop stopColor="#9d9d9d" /><stop offset="1" stopColor="#bdbdbd" /></linearGradient></defs>
            <path d="M1 5q0-4 4-4h13q2 0 4 2t4 2h16q3 0 3 4v6H1z" fill="url(#fd)" />
            <rect x=".5" y="9" width="45" height="32" rx="4" fill="url(#fg)" stroke="#cfcfcf" strokeWidth=".8" /><rect x="17" y="17" width="12" height="3.500" rx="1.500" fill="#f5f5f5" />
          </svg>
        </Slot>
        <Slot dots={1}>
          <svg width="46" height="37" viewBox="0 0 46 37"><rect x=".5" y=".5" width="45" height="36" rx="4" fill="#4b4b4b" stroke="#858585" /><path d="M7 6l6 3L7 12M14 15h7" stroke="#fff" strokeWidth="1.600" fill="none" /></svg>
        </Slot>
        <Slot>
          <svg width="46" height="40" viewBox="0 0 46 40" className="-mt-[2px]">
            <rect x="1" y="1" width="44" height="38" rx="4" fill="#a6a69e" stroke="#d9d9d0" strokeWidth="2" /><rect x="4.500" y="4" width="37" height="29" rx="1" fill="#2b0505" />
            <path d="M7 6h15.500v11H7zM24 6h15v11H24z" fill="#c21f24" /><path d="M7 19.500h15.500V31H7zM24 19.500h15V31H24z" fill="#7b0000" />
            <path d="M8 8l3 1.500L8 11M12 12.500h3.500M25.500 8l3 1.500-3 1.500M29.500 12.500H33M8 22l3 1.500L8 25M12 27h3.500M25.500 22l3 1.500-3 1.500M29.500 27H33" stroke="#fff" fill="none" /><rect x="31" y="35.500" width="3" height="1.500" fill="#e11" />
          </svg>
        </Slot>
        <Slot dots={1}>
          <div className="flex h-[39px] w-[39px] items-center justify-center rounded-[8px] bg-gradient-to-b from-[#9334b0] to-[#5b2d93]"><FaGithub size={33} color="#f7f5fa" /></div>
        </Slot>
        <div className="mx-[11px] my-[1px] h-px bg-[#4e4e4e]" />
        <Slot dots={1}>
          <svg width="46" height="46" viewBox="0 0 46 46" fill="none">
            <circle cx="23" cy="23" r="22.500" fill="#dedede" /><circle cx="23" cy="23" r="19" fill="#4b4b4b" />
            <circle cx="23" cy="23" r="13.500" stroke="#dedede" strokeWidth="3" strokeDasharray="2.700 2.602" /><circle cx="23" cy="23" r="10.800" stroke="#dedede" strokeWidth="3" />
            <circle cx="23" cy="23" r="4.500" fill="#dedede" /><path d="M23 23h11M23 23l-6-10M23 23l-6 10" stroke="#dedede" strokeWidth="2.200" />
          </svg>
        </Slot>
        <Slot dots={2} active>
          <svg width="48" height="34" viewBox="0 0 48 34" fill="none" strokeLinejoin="round" strokeWidth="4">
            <g stroke="#a4a4a4" transform="translate(1 0)"><path d="M7 8v16M5 6q11-3 9 4-2 5-7 6l10 11M21 7l5 16L34 4h4M36 12v9M38 8h7l-5 11h6" /></g>
            <g stroke="#fff" transform="translate(-.5 -.5)" strokeWidth="2.800"><path d="M7 8v16M5 6q11-3 9 4-2 5-7 6l10 11M21 7l5 16L34 4h4M36 12v9M38 8h7l-5 11h6" /></g>
          </svg>
        </Slot>
        <Slot dots={1}>
          <svg width="46" height="38" viewBox="0 0 46 38">
            <rect x=".5" y=".5" width="45" height="37" rx="4" fill="#dcdccf" /><path d="M1 1h27L9 30H1z" fill="#f0efe6" /><path d="M.5 29.500h45V34q0 4-4 4h-37q-4 0-4-4z" fill="#a9a592" />
            <circle cx="35" cy="10" r="5" fill="#fbfbf6" /><path d="M29 25l8 8" stroke="#3a3a3a" strokeWidth="3" /><circle cx="20.500" cy="16" r="11.500" fill="#e8e8e4" stroke="#6d6d6d" strokeWidth="2" /><path d="M12 22l8-12 8 12z" fill="#fafaf8" />
          </svg>
        </Slot>
        <Slot><div className="-mt-[3px] h-[35px] w-[46px] rounded-t-[4px] bg-gradient-to-b from-[#a5a5a5] via-[#777] to-[#222]" /></Slot>
        <div className="mx-[20px] mt-[1px] grid grid-cols-3 gap-[6px]">
          {Array.from({ length: 9 }, (_, i) => <i key={i} className="h-[6px] w-[6px] rounded-[1.500px] bg-[#f4f4f4]" />)}
        </div>
      </div>
    </aside>
  );
}

function TopBar() {
  return (
    <div className="grid h-[27px] shrink-0 grid-cols-3 items-center bg-[#131313] pb-px text-[14px] text-[#efefef]">
      <div className="flex items-center pl-[18px]">
        <Fit w={62}>Activities</Fit>
        <svg width="15" height="11" viewBox="0 0 48 34" fill="none" stroke="#fff" strokeWidth="5" className="ml-[38px]"><path d="M7 6v22M5 6q12-4 9 3-2 6-7 7l10 12M21 4l6 21L35 4M35 12v12M39 9h7l-6 14h7" /></svg>
        <Fit w={32} className="ml-[6px]">rviz2</Fit>
      </div>
      <div className="flex justify-center pl-[71px]"><Fit w={89}>May 15  15:59</Fit></div>
      <div className="flex items-center justify-end pr-[15px]">
        <svg width="15" height="14" viewBox="0 0 15 14"><path d="M5 0h5v4H5zM0 9h5v4H0zM10 9h5v4h-5z" fill="#f2f2f2" /><path d="M7.500 4v2.500M2.500 9V6.500h10V9" stroke="#f2f2f2" fill="none" /></svg>
        <svg width="15" height="15" viewBox="0 0 15 15" className="ml-[14px]" fill="none" stroke="#777"><path d="M.5 5H3l4-4v12L3 10H.5z" fill="#777" /><path d="M9 5q2 2 0 5M11 3q3 4 0 9M1 14L14 1" strokeWidth="1.300" /></svg>
        <svg width="17" height="16" viewBox="0 0 17 16" className="ml-[13px]"><path d="M3.500 4L0 9h2.200L1.500 13 5 8H2.800z" fill="#f2f2f2" /><rect x="7.500" y="2" width="8.500" height="13" rx="1.500" fill="#555" stroke="#f2f2f2" strokeWidth="1.500" /><rect x="9.500" y="4" width="4.500" height="9" fill="#e8e8e8" /><path d="M9.500.5h4.500v1.500H9.500z" fill="#f2f2f2" /></svg>
      </div>
    </div>
  );
}

function Notification() {
  return (
    <div className="absolute top-[31px] left-[467px] flex h-[77px] w-[501px] items-center rounded-[11px] border border-[#4a4a4a] bg-[#1d1d1d] pl-[18px] text-[14px] shadow-[0_2px_6px_rgba(0,0,0,0.35)]">
      <svg width="32" height="18" viewBox="0 0 32 18" shapeRendering="crispEdges" className="-mt-[8px]">
        <rect width="32" height="18" fill="#fff" /><rect width="32" height="1" fill="#555" /><rect width="2" height="18" fill="#161616" /><path d="M1 2v14" stroke="#ddd" strokeDasharray="1 1" />
        <rect x="10" y="2" width="15" height="14" fill="#303030" /><path d="M12 3l13-1v10l-11 3z" fill="#5e6e6c" /><path d="M14 3h10l-6 9h-4z" fill="#111" /><path d="M15 4h7l-5 7h-2z" fill="#c1c1c1" />
        <path d="M3 4h1v1h-1zM5 3h1v1h-1zM26 4h2v1h-2zM28 6h1v1h-1zM4 13h2v1h-2zM27 15h1v1h-1zM30 17h1v1h-1z" fill="#444" />
      </svg>
      <div className="ml-[15px] flex flex-col items-start gap-[5px]">
        <div className="flex"><Fit w={138} className="text-[#f4f4f4]">Screenshot captured</Fit></div>
        <div className="flex"><Fit w={295} className="text-[#dedede]">You can paste the image from the clipboard.</Fit></div>
      </div>
    </div>
  );
}

export default function App() {
  return (
    <div className="relative flex h-[768px] w-[1366px] flex-col overflow-hidden bg-[#efefef] font-['Noto_Sans',sans-serif] text-[14.2px] leading-[19px] text-black">
      <TopBar />
      <div className="flex min-h-0 flex-1">
        <Dock />
        <main className="flex min-w-0 flex-1 flex-col">
          <div className="flex h-[37px] shrink-0 items-center justify-end gap-[12px] border-t border-b border-t-[#333] border-b-[#151515] bg-[#222] pr-[7px] pb-px">
            {["M2.500 9h8", "M3 5h6v6H3zM5.500 3H11v5.500", "M3 3l7 7M10 3l-7 7"].map((d) => (
              <span key={d} className="flex h-[22px] w-[22px] items-center justify-center rounded-full bg-[#373737]">
                <svg width="13" height="13" viewBox="0 0 13 13" fill="none" stroke="#fff" strokeWidth="1.200"><path d={d} /></svg>
              </span>
            ))}
          </div>
          <div className="flex h-[21px] shrink-0 items-center gap-[15px] pl-[10px] [&_span]:underline-offset-2">
            {[["F", "ile", 8, 16], ["P", "anels", 9, 35], ["H", "elp", 11, 20]].map(([a, b, wa, wb]) => (
              <div key={a as string} className="flex">
                <Fit w={wa as number} className="underline decoration-[1.500px]">{a as string}</Fit>
                <Fit w={wb as number}>{b as string}</Fit>
              </div>
            ))}
          </div>
          <Toolbar />
          <div className="flex min-h-0 flex-1 pt-[2px]">
            <DisplaysPanel />
            <div className="flex w-[31px] shrink-0 items-center pb-[7px] pl-[3px]"><Dots vertical /><span className="ml-[5px] flex"><Caret dir="l" /></span></div>
            <div className="flex flex-col items-center pt-[9px]">
              <MapView />
              <div className="mt-[11px] -ml-[69px]"><Dots /></div>
            </div>
            <div className="flex w-[31px] shrink-0 items-center pb-[7px] pl-[12px]"><Caret dir="r" /><span className="ml-[7px] flex"><Dots vertical /></span></div>
            <ViewsPanel />
          </div>
          <TimePanel />
        </main>
      </div>
      <Notification />
    </div>
  );
}
